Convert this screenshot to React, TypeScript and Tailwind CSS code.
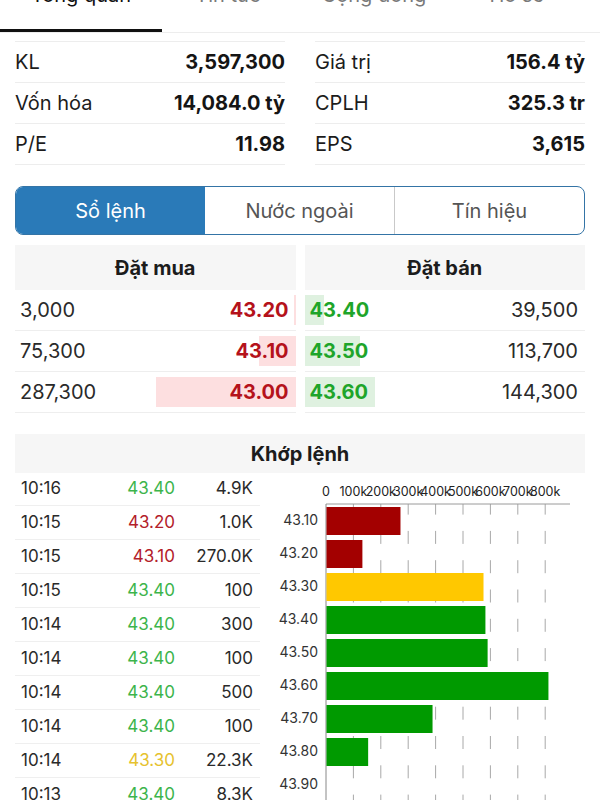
import React from 'react';

const stats = [
  [
    ['KL', '3,597,300'],
    ['Vốn hóa', '14,084.0 tỷ'],
    ['P/E', '11.98'],
  ],
  [
    ['Giá trị', '156.4 tỷ'],
    ['CPLH', '325.3 tr'],
    ['EPS', '3,615'],
  ],
];

const bids = [
  { qty: '3,000', vol: 3000, price: '43.20' },
  { qty: '75,300', vol: 75300, price: '43.10' },
  { qty: '287,300', vol: 287300, price: '43.00' },
];

const asks = [
  { qty: '39,500', vol: 39500, price: '43.40' },
  { qty: '113,700', vol: 113700, price: '43.50' },
  { qty: '144,300', vol: 144300, price: '43.60' },
];

const trades = [
  ['10:16', '43.40', '4.9K', 'g'],
  ['10:15', '43.20', '1.0K', 'r'],
  ['10:15', '43.10', '270.0K', 'r'],
  ['10:15', '43.40', '100', 'g'],
  ['10:14', '43.40', '300', 'g'],
  ['10:14', '43.40', '100', 'g'],
  ['10:14', '43.40', '500', 'g'],
  ['10:14', '43.40', '100', 'g'],
  ['10:14', '43.30', '22.3K', 'y'],
  ['10:13', '43.40', '8.3K', 'g'],
];

const priceColor: Record<string, string> = {
  g: 'text-[#3cb44b]',
  r: 'text-[#b3202a]',
  y: 'text-[#e6c22e]',
};

const volume = [
  ['43.10', 270, '#a30000'],
  ['43.20', 131, '#a30000'],
  ['43.30', 573, '#ffc800'],
  ['43.40', 580, '#009a00'],
  ['43.50', 588, '#009a00'],
  ['43.60', 810, '#009a00'],
  ['43.70', 387, '#009a00'],
  ['43.80', 152, '#009a00'],
  ['43.90', 0, '#009a00'],
] as const;

const PX_PER_VOL = 140 / 287300;

function VolumeChart() {
  const x0 = 66;
  const step = 27.4;
  return (
    <svg width="325" height="327" className="block">
      {Array.from({ length: 8 }, (_, i) => (
        <line
          key={i}
          x1={x0 + step * (i + 1)}
          x2={x0 + step * (i + 1)}
          y1={31}
          y2={327}
          stroke="#a8a8a8"
          strokeWidth={1}
          strokeDasharray="13 16.3"
          strokeDashoffset={2.4}
        />
      ))}
      <line x1={x0} x2={310} y1={31} y2={31} stroke="#9a9a9a" strokeWidth={1} />
      <line x1={x0} x2={x0} y1={31} y2={327} stroke="#888" strokeWidth={1} />
      {Array.from({ length: 9 }, (_, i) => (
        <text
          key={i}
          x={x0 + step * i}
          y={20}
          textAnchor="middle"
          dominantBaseline="middle"
          fontSize={12.5}
          fill="#222"
          fontFamily="Inter, sans-serif"
        >
          {i === 0 ? '0' : `${i}00k`}
        </text>
      ))}
      {volume.map(([label, v, color], i) => (
        <g key={label}>
          {v > 0 && (
            <rect x={x0 + 0.5} y={34 + 33 * i} width={(v / 100) * step} height={28} fill={color} />
          )}
          <text
            x={58}
            y={48 + 33 * i}
            textAnchor="end"
            dominantBaseline="middle"
            fontSize={14}
            fill="#333"
            fontFamily="Inter, sans-serif"
          >
            {label}
          </text>
        </g>
      ))}
    </svg>
  );
}

export default function App() {
  return (
    <div className="w-[600px] h-[800px] overflow-hidden bg-white [font-family:Inter,sans-serif] text-[#1c1c1c]">
      {/* Top tabs (scrolled, text cut off) */}
      <div className="-mt-[17px] h-[50px] flex border-b border-[#ededed] text-[20px] leading-[24px]">
        <div className="w-[162px] flex justify-center border-b-[3px] border-[#111] text-[#111]">Tổng quan</div>
        <div className="w-[132px] flex justify-center text-[#7a7a7a]">Tin tức</div>
        <div className="w-[160px] flex justify-center text-[#7a7a7a]">Cộng đồng</div>
        <div className="w-[126px] flex justify-center text-[#7a7a7a]">Hồ sơ</div>
      </div>

      {/* Stats */}
      <div className="mx-[15px] mt-[8px] grid grid-cols-2 gap-x-[30px]">
        {stats.map((col, ci) => (
          <div key={ci} className="border-t border-[#ededed]">
            {col.map(([k, v]) => (
              <div key={k} className="h-[41px] flex items-center justify-between border-b border-[#ededed] text-[20px]">
                <span>{k}</span>
                <span className="font-bold text-[#151515]">{v}</span>
              </div>
            ))}
          </div>
        ))}
      </div>

      {/* Segmented control */}
      <div className="mx-[15px] mt-[21px] h-[49px] flex rounded-[8px] border border-[#3474a6] overflow-hidden text-[20px]">
        <div className="flex-1 flex items-center justify-center bg-[#2a7ab8] text-white">Sổ lệnh</div>
        <div className="flex-1 flex items-center justify-center text-[#555] border-r border-[#c9c9c9]">Nước ngoài</div>
        <div className="flex-1 flex items-center justify-center text-[#555]">Tín hiệu</div>
      </div>

      {/* Order book */}
      <div className="mx-[15px] mt-[10px] grid grid-cols-2 gap-x-[9px] text-[20px]">
        <div>
          <div className="h-[45px] flex items-center justify-center bg-[#f6f6f6] font-bold">Đặt mua</div>
          {bids.map((b) => (
            <div key={b.price} className="relative h-[41px] flex items-center justify-between border-b border-[#eeeeee] pl-[5px] pr-[7px]">
              <div
                className="absolute right-0 top-[5px] h-[30px] bg-[#fddfe0]"
                style={{ width: b.vol * PX_PER_VOL }}
              />
              <span className="relative text-[#2a2a2a]">{b.qty}</span>
              <span className="relative font-bold text-[#b5121b]">{b.price}</span>
            </div>
          ))}
        </div>
        <div>
          <div className="h-[45px] flex items-center justify-center bg-[#f6f6f6] font-bold">Đặt bán</div>
          {asks.map((a) => (
            <div key={a.price} className="relative h-[41px] flex items-center justify-between border-b border-[#eeeeee] pl-[5px] pr-[7px]">
              <div
                className="absolute left-0 top-[5px] h-[30px] bg-[#dff1e0]"
                style={{ width: a.vol * PX_PER_VOL }}
              />
              <span className="relative font-bold text-[#1ea52a]">{a.price}</span>
              <span className="relative text-[#2a2a2a]">{a.qty}</span>
            </div>
          ))}
        </div>
      </div>

      {/* Matched orders */}
      <div className="mx-[15px] mt-[21px] h-[39px] flex items-center justify-center bg-[#f6f6f6] text-[20px] font-bold">
        Khớp lệnh
      </div>
      <div className="ml-[15px] mr-[15px] flex">
        <div className="w-[245px]">
          {trades.map(([t, p, v, c], i) => (
            <div
              key={i}
              className={`flex items-center border-b border-[#efefef] pl-[6px] pr-[7px] text-[17px] ${i === 0 ? 'h-[33px]' : 'h-[34px]'}`}
            >
              <span className="flex-1 text-[#2a2a2a]">{t}</span>
              <span className={`w-[80px] text-right ${priceColor[c]}`}>{p}</span>
              <span className="w-[78px] text-right text-[#2a2a2a]">{v}</span>
            </div>
          ))}
        </div>
        <div className="flex-1">
          <VolumeChart />
        </div>
      </div>
    </div>
  );
}
